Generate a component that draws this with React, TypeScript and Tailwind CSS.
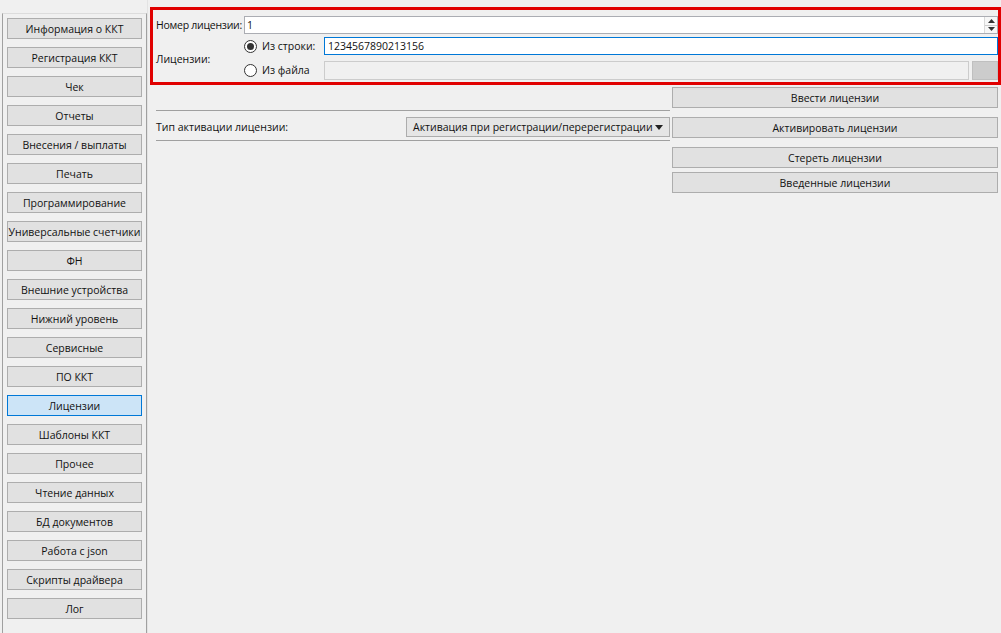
const MENU = [
  'Информация о ККТ',
  'Регистрация ККТ',
  'Чек',
  'Отчеты',
  'Внесения / выплаты',
  'Печать',
  'Программирование',
  'Универсальные счетчики',
  'ФН',
  'Внешние устройства',
  'Нижний уровень',
  'Сервисные',
  'ПО ККТ',
  'Лицензии',
  'Шаблоны ККТ',
  'Прочее',
  'Чтение данных',
  'БД документов',
  'Работа с json',
  'Скрипты драйвера',
  'Лог',
];

const ACTIVE = 'Лицензии';

function Radio({ checked }: { checked?: boolean }) {
  return (
    <span className="w-[13px] h-[13px] rounded-full border border-[#333] bg-white flex items-center justify-center flex-shrink-0">
      {checked && <span className="w-[7px] h-[7px] rounded-full bg-[#333]" />}
    </span>
  );
}

function WinButton({ label, className = '' }: { label: string; className?: string }) {
  return (
    <button className={`h-[21px] w-full bg-[#e1e1e1] border border-[#adadad] text-[10.5px] text-[#111] leading-none pt-px ${className}`}>
      {label}
    </button>
  );
}

export default function App() {
  return (
    <div className="w-[1001px] h-[633px] bg-[#f0f0f0] flex overflow-hidden font-['Open_Sans',sans-serif] text-[10.5px] text-[#111]">
      {/* Sidebar */}
      <aside className="w-[147px] flex-shrink-0 pt-[13px] pl-[2px]">
        <div className="h-full border-l border-t border-r border-[#a0a0a0] border-t-[#dcdcdc] pl-[4px] pr-[4px] pt-[4px] flex flex-col gap-[8px]">
          {MENU.map(m => (
            <button
              key={m}
              className={`h-[21px] w-full border text-[10.5px] leading-none pt-px whitespace-nowrap ${
                m === ACTIVE ? 'bg-[#cce4f7] border-[#0078d7]' : 'bg-[#e1e1e1] border-[#adadad]'
              }`}
            >
              {m}
            </button>
          ))}
        </div>
      </aside>

      {/* Main */}
      <main className="w-[854px] min-w-0 flex flex-col pt-[7px] pl-[2px] border-l border-[#e3e3e3]">
        {/* Highlighted block */}
        <div className="border-[3px] border-[#e00000] pl-[3px] pt-[6px] pb-[2px]">
          <div className="flex items-center h-[18px]">
            <span className="w-[88px] flex-shrink-0 whitespace-nowrap pt-[2px] tracking-[-0.25px]">Номер лицензии:</span>
            <div className="flex-1 min-w-0 h-[18px] bg-white border border-[#abadb3] flex items-center pl-[2px]">
              <span className="flex-1 pt-px">1</span>
              <div className="w-[13px] h-[16px] border-l border-[#d9d9d9] flex flex-col">
                <span className="flex-1 flex items-center justify-center border-b border-[#ccc] bg-[#f7f7f7]">
                  <svg width="7" height="4" viewBox="0 0 7 4"><path d="M0 4 L3.5 0 L7 4 Z" fill="#333" /></svg>
                </span>
                <span className="flex-1 flex items-center justify-center bg-[#f7f7f7]">
                  <svg width="7" height="4" viewBox="0 0 7 4"><path d="M0 0 L3.5 4 L7 0 Z" fill="#333" /></svg>
                </span>
              </div>
            </div>
          </div>

          <div className="flex items-center mt-[3px]">
            <span className="w-[88px] flex-shrink-0 pt-[2px]">Лицензии:</span>
            <div className="flex-1 min-w-0 flex flex-col gap-[6px]">
              <div className="flex items-center h-[18px]">
                <div className="w-[80px] flex items-center gap-[5px]">
                  <Radio checked />
                  <span className="pt-px">Из строки:</span>
                </div>
                <div className="flex-1 min-w-0 h-[18px] bg-white border border-[#0078d7] flex items-center pl-[3px] pt-px">
                  1234567890213156
                </div>
              </div>
              <div className="flex items-center h-[19px]">
                <div className="w-[80px] flex items-center gap-[5px]">
                  <Radio />
                  <span className="pt-px">Из файла</span>
                </div>
                <div className="flex-1 min-w-0 h-[19px] bg-[#f0f0f0] border border-[#cccccc]" />
                <div className="w-[26px] h-[19px] ml-[3px] bg-[#cccccc] border border-[#bfbfbf]" />
              </div>
            </div>
          </div>
        </div>

        {/* Below */}
        <div className="flex mt-[2px] pr-[3px]">
          <div className="flex-1 min-w-0 pl-[6px] pr-[2px] flex flex-col">
            <div className="h-[23px]" />
            <div className="h-px bg-[#a0a0a0]" />
            <div className="flex items-center mt-[6px] h-[20px]">
              <span className="w-[250px] flex-shrink-0 pt-px">Тип активации лицензии:</span>
              <div className="flex-1 min-w-0 h-[20px] bg-[#e5e5e5] border border-[#acacac] flex items-center pl-[6px] pr-[6px]">
                <span className="flex-1 whitespace-nowrap pt-px">Активация при регистрации/перерегистрации</span>
                <svg width="8" height="5" viewBox="0 0 8 5"><path d="M0 0 L4 5 L8 0 Z" fill="#222" /></svg>
              </div>
            </div>
            <div className="h-px bg-[#a0a0a0] mt-[3px]" />
          </div>
          <div className="w-[326px] flex-shrink-0 flex flex-col">
            <WinButton label="Ввести лицензии" />
            <WinButton label="Активировать лицензии" className="mt-[9px]" />
            <WinButton label="Стереть лицензии" className="mt-[9px]" />
            <WinButton label="Введенные лицензии" className="mt-[4px]" />
          </div>
        </div>
      </main>
    </div>
  );
}
